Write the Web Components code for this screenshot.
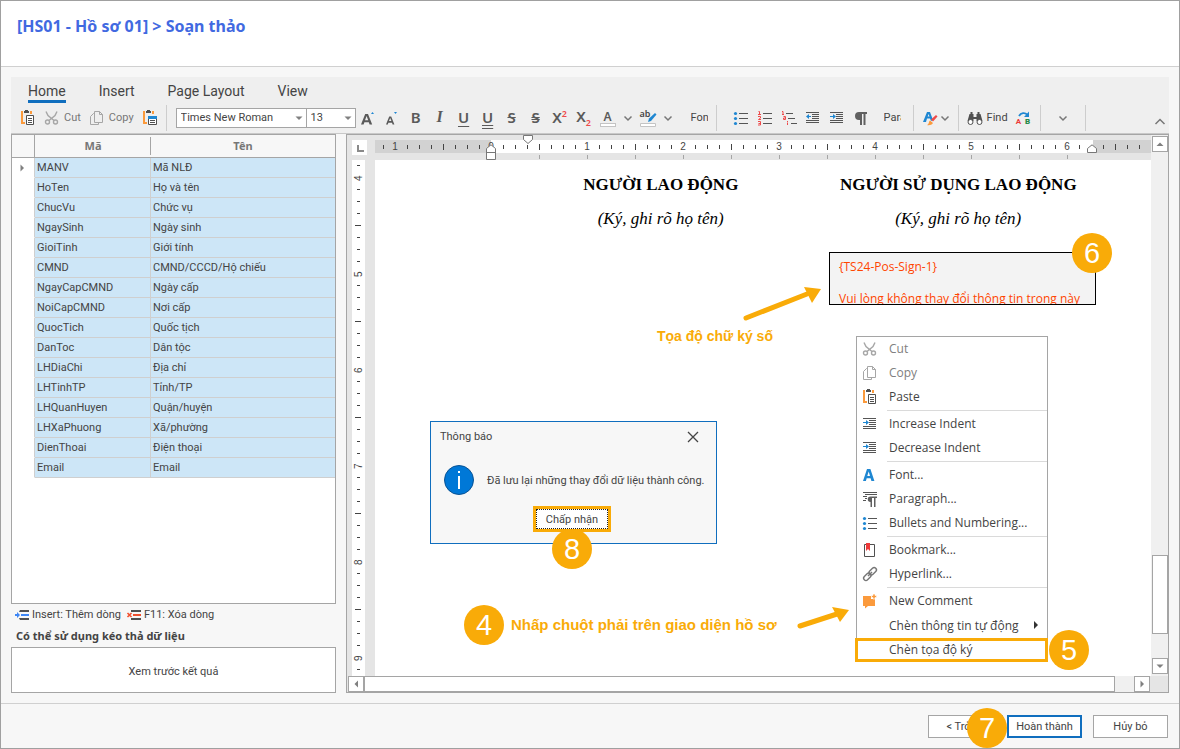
<!DOCTYPE html>
<html lang="vi">
<head>
<meta charset="utf-8">
<title>Soạn thảo hồ sơ</title>
<style>
  body {
    margin: 0;
    --ui: Roboto, "Noto Sans", sans-serif;
    --menu: "Open Sans", "Noto Sans", sans-serif;
    --strong: "Noto Sans", "Open Sans", sans-serif;
    --line: #a5a5a5;
    --blue: #106ebe;
    --mark: #f9ab08;
    color: #444;
    font: 11px/16px var(--ui);
  }
</style>
</head>
<body>
<record-wizard>
  <span slot="title">[HS01 - Hồ sơ 01] &gt; Soạn thảo</span>
  <ribbon-bar slot="ribbon"></ribbon-bar>
  <field-panel slot="fields"></field-panel>
  <doc-editor slot="editor">
    <signature-box></signature-box>
    <message-box heading="Thông báo" action="Chấp nhận">Đã lưu lại những thay đổi dữ liệu thành công.</message-box>
    <context-menu></context-menu>
    <step-note class="sign" arrow="above">Tọa độ chữ ký số</step-note>
    <step-note class="click" arrow="after" step="4">Nhấp chuột phải trên giao diện hồ sơ</step-note>
  </doc-editor>
</record-wizard>

<script>
const PASTE = `
  <path d="M1 1h2v11h2v2H1zM10 1h2v3h-2z" fill="#fb9a3c"/>
  <path d="M4 1h1V0h3v1h1v2H4z" fill="#505050"/>`;
const INDENT = `<path d="M1 2.5h13M7 4.5h7M7 6.5h7M7 8.5h7M1 10.5h13M1 12.5h13" stroke="#555"/>
  <path d="M1 6h3V4l3 2.5L4 9V7H1z" fill="#1f87d2"/>`;
const OUTDENT = `<path d="M1 2.5h13M7 4.5h7M7 6.5h7M7 8.5h7M1 10.5h13M1 12.5h13" stroke="#555"/>
  <path d="M6 6H4V4L1 6.5 4 9V7h2z" fill="#1f87d2"/>`;

const ICONS = {
  paste: `${PASTE}<path d="M6.5 5.5h7v9h-7z" fill="#fff" stroke="#505050"/><path d="M8 8.5h4M8 10.5h4M8 12.5h4" stroke="#505050"/>`,
  pasteSpecial: `${PASTE}<path d="M6.5 6.5h8v8h-8z" fill="#fff" stroke="#505050"/><path d="M6 6h9v3H6z" fill="#1f87d2"/><path d="M8 10.5h5M8 12.5h5" stroke="#505050"/>`,
  cut: `<g fill="none" stroke="#a6a6a6" stroke-width="1.4"><path d="M2 1.5l2 4 6 5M13 1.5l-2 4-6 5"/><circle cx="3.5" cy="12" r="2"/><circle cx="11.5" cy="12" r="2"/></g>`,
  copy: `<g fill="none" stroke="#a6a6a6"><path d="M5.5 3.5h-1l-3 3v8h8v-2"/><path d="M5.5 1.5h5l3 3v8h-8z"/><path d="M10.5 1.5v3h3"/></g>`,
  bullets: `<path d="M6 3.5h9M6 8.5h9M6 13.5h9" stroke="#555"/><g fill="#1f87d2"><circle cx="2.5" cy="3.5" r="1.6"/><circle cx="2.5" cy="8.5" r="1.6"/><circle cx="2.5" cy="13.500" r="1.6"/></g>`,
  numbers: `<path d="M6 3.5h9M6 8.5h9M6 13.5h9" stroke="#555"/><path d="M1.5 1.5h1v3M1 4.5h3M1 6.5h2.5v1.5L1.5 9.5H4M1 11.5h2.5v3.500H1M1.5 13.5h2" fill="none" stroke="#ee4a4a"/>`,
  multilevel: `<path d="M5 3.5h7M7 8.5h7M10 13.5h6" stroke="#555"/><path d="M1 1.5h1v3M1 4.5h2M2.5 6.5h2v3h-2v-1.500h2M6.5 11v1M6.5 12.5v2.500" fill="none" stroke="#ee4a4a"/>`,
  indent: INDENT,
  outdent: OUTDENT,
  pilcrow: '<path d="M14 2H6a4 4 0 0 0 0 8h1v5h2V4h1.5v11h2V4H14z" fill="#606060"/>',
  paragraph: `<path d="M1 1.5h14M3 3.5h12M1 5.5h4M3 7.5h2M1 9.5h3" stroke="#555"/><path d="M15 5.5H8.5a2.700 2.700 0 0 0 0 5.5v5h1.5V7h2v9h1.5V7H15z" fill="#606060"/>`,
  grow: '<path d="M1 14.500L5.200 4h2.800l4.200 10.500H9.600l-.8-2.300H4.400l-.8 2.300zM5 10.300h3.200L6.600 6z" fill="#5a5a5a"/><path d="M11 4l1.500-2L14 4z" fill="#1f87d2"/>',
  shrink: '<path d="M2 14.500L5.200 6.500h2l3.200 8H8.600l-.6-1.800H4.400l-.6 1.800zM5 11.100h2.400L6.200 8z" fill="#5a5a5a"/><path d="M10 2h3l-1.500 2z" fill="#1f87d2"/>',
  brush: '<path d="M1 12L5 2h3l3 8-2 1-1-2.500H5L4 12zM5.700 6.500h1.800L6.600 4z" fill="#1f87d2"/><path d="M9 9.500l5-4.500 1.500 1.500-4.500 5z" fill="#ee4a4a"/><path d="M5 15c2-.5 1.500-3 3-4.500l3 2.500c-1 2-4 2.500-6 2z" fill="#fb9a3c"/>',
  highlight: '<path d="M8 12l1-3.500L15 3l1.500 1.500L11 11z" fill="#1f87d2"/><path d="M.5 13.500h15v3H.5z" fill="#fff" stroke="#c4c4c4"/>',
  find: '<path d="M2.500 4h4v3h3V4h4l2 7H9.500V9h-3v2H.500zM3.500 2h2v2h-2zM10.500 2h2v2h-2z" fill="#505050"/><circle cx="3.500" cy="12" r="2.500" fill="#fff" stroke="#505050"/><circle cx="12.500" cy="12" r="2.500" fill="#fff" stroke="#505050"/>',
  replace: '<path d="M3 6c2-3.500 6-3.500 8-1.500" fill="none" stroke="#1f87d2" stroke-width="1.800"/><path d="M13 1.500V7H8z" fill="#1f87d2"/>',
  fontA: '<path d="M1 14L5 2h3.400l4 12h-3l-.8-2.700H4.700L3.900 14zM5.300 9h2.700L6.700 4.500z" fill="#1f87d2"/>',
  bookmark: '<path d="M2.500 2.500h10v12h-10z" fill="#fff" stroke="#505050"/><path d="M4 1h4v8L6 7 4 9z" fill="#ee3a3a"/>',
  link: '<g fill="none" stroke="#767676" stroke-width="1.400"><rect x="6.500" y="3" width="8.500" height="4.600" rx="2.300" transform="rotate(-45 10.700 5.300)"/><rect x="1" y="8.500" width="8.500" height="4.600" rx="2.300" transform="rotate(-45 5.300 10.700)"/><path d="M6 10l4-4"/></g>',
  comment: '<path d="M1 3h8v3h4v7H6l-3 2.500V13H1z" fill="#fb9a3c"/><path d="M11 1h2v1.500h1.500v2H13V6h-2V4.500H9.500v-2H11z" fill="#fb9a3c" stroke="#fff" stroke-width=".6"/>',
  rowAdd: `<path d="M6 3h9v2H5zM5 11h10v2H6z" fill="#505050"/><path d="M7 7h8v2H7zM1 7h2V5l3 3-3 3V9H1z" fill="#3f87f5"/>`,
  rowDel: `<path d="M5 3h10v2H5zM5 11h10v2H5z" fill="#505050"/><path d="M7 7h8v2H7z" fill="#f0502e"/><path d="M1.500 6l4 4M5.500 6l-4 4" stroke="#f0502e" stroke-width="1.600"/>`,
  down: '<path d="M4.500 6.500L8 10l3.500-3.500" fill="none" stroke="#777" stroke-width="1.500"/>',
  up: '<path d="M3.500 10L8 5.500l4.500 4.500" fill="none" stroke="#777" stroke-width="1.500"/>',
  close: '<path d="M3 3l10 10M13 3L3 13" stroke="#444" stroke-width="1.300"/>',
  triDown: '<path d="M4.500 6.500h7L8 10z" fill="#808080"/>',
  triUp: '<path d="M4.500 10h7L8 6.500z" fill="#808080"/>',
  triLeft: '<path d="M10 4.500v7L6.500 8z" fill="#808080"/>',
  triRight: '<path d="M6.500 4.500v7L10 8z" fill="#808080"/>',
  triMore: '<path d="M4 3v8l4-4z" fill="#333"/>',
};

// shared base: every element here is just markup in an open shadow root
class Base extends HTMLElement {
  connectedCallback() {
    if (this.shadowRoot) { return; }
    this.attachShadow({ mode: 'open' }).innerHTML = this.render();
  }
}

class UiIcon extends Base {
  render() {
    return `
      <style>
        :host { display: inline-block; flex: none; height: 16px; width: 16px; }
        svg { display: block; overflow: visible; }
      </style>
      <svg width="16" height="16" viewBox="0 0 16 16" aria-hidden="true">${ICONS[this.getAttribute('name')] || ''}</svg>
    `;
  }
}

class StepPin extends Base {
  render() {
    return `
      <style>
        :host {
          align-items: center;
          background: var(--mark);
          border-radius: 50%;
          color: #fff;
          display: flex;
          flex: none;
          font: 29px/40px "Liberation Sans", Arial, sans-serif;
          height: 40px;
          justify-content: center;
          width: 40px;
        }
      </style>
      <slot></slot>
    `;
  }
}

class RecordWizard extends Base {
  render() {
    return `
      <style>
        :host {
          background: #f7f7f7;
          border: 1px solid #a0a0a0;
          box-sizing: border-box;
          display: flex;
          flex-direction: column;
          min-height: 100vh;
        }
        header {
          background: #fff;
          border-bottom: 1px solid #d0d0d0;
          padding: 13px 16px 28px;
        }
        h1 {
          color: #4169e1;
          font: bold 16px/24px var(--strong);
          margin: 0;
        }
        main {
          display: flex;
          flex: 1;
          flex-direction: column;
          padding: 10px;
        }
        .work {
          display: grid;
          flex: 1;
          gap: 10px;
          grid-template-columns: 325px minmax(0, 1fr);
        }
        footer {
          border-top: 1px solid #d0d0d0;
          display: flex;
          gap: 11px;
          justify-content: flex-end;
          padding: 11px 11px 10px;
        }
        .pair { display: flex; gap: 4px; position: relative; }
        button {
          background: #fff;
          border: 1px solid #a5a5a5;
          color: #444;
          font: inherit;
          height: 23px;
          padding: 0;
          width: 75px;
        }
        .default { border: 2px solid var(--blue); }
        step-pin { left: 39px; position: absolute; top: -7px; }
      </style>
      <header><h1><slot name="title"></slot></h1></header>
      <main>
        <slot name="ribbon"></slot>
        <div class="work">
          <slot name="fields"></slot>
          <slot name="editor"></slot>
        </div>
      </main>
      <footer>
        <div class="pair">
          <button>&lt; Trở lại</button>
          <button class="default">Hoàn thành</button>
          <step-pin>7</step-pin>
        </div>
        <button>Hủy bỏ</button>
      </footer>
    `;
  }
}

class RibbonBar extends Base {
  icon(name, label) {
    return `<button class="icon" aria-label="${label}"><ui-icon name="${name}"></ui-icon></button>`;
  }

  chevron(label) {
    return `<button class="drop" aria-label="${label}"><ui-icon name="down"></ui-icon></button>`;
  }

  render() {
    return `
      <style>
        :host {
          background: #efefef;
          border-bottom: 1px solid #c8c8c8;
          display: block;
        }
        nav { display: flex; gap: 33px; padding: 5px 17px 0; }
        nav a {
          border-bottom: 3px solid transparent;
          color: #444;
          font-size: 14px;
          line-height: 18px;
          text-decoration: none;
        }
        nav a.on { border-color: var(--blue); }
        .tools {
          align-items: center;
          display: flex;
          height: 26px;
          padding: 3px 0 1px 9px;
        }
        .group {
          align-items: center;
          border-right: 1px solid #cdcdcd;
          display: flex;
          height: 26px;
          margin-bottom: 2px;
        }
        button {
          align-items: center;
          background: none;
          border: 0;
          color: #444;
          display: flex;
          font: inherit;
          height: 22px;
          justify-content: center;
          padding: 0;
        }
        .icon { width: 24px; }
        .drop { width: 16px; }
        .text { gap: 4px; }
        .off { color: #777; }
        .clip { justify-content: flex-start; overflow: hidden; width: 17px; }
        .clipboard { gap: 8px; padding-right: 8px; }
        .font { padding-left: 9px; padding-right: 8px; }
        .clip.font-name { margin: 0 0 0 15px; }
        .para { padding: 0 12px; }
        .para .clip { margin-left: 11px; }
        .style { padding: 0 8px 0 6px; }
        .style .icon { width: 20px; }
        .style .drop { width: 10px; }
        .edit { gap: 8px; padding: 0 8px; }
        .more { padding: 0 14px; }
        .icon.collapse { margin-left: auto; padding-top: 6px; width: 18px; }
        .combo { display: grid; }
        .combo > * { grid-area: 1 / 1; }
        .combo ui-icon { align-self: center; justify-self: end; pointer-events: none; }
        select {
          appearance: none;
          background: #fff;
          border: 1px solid #a5a5a5;
          border-radius: 0;
          color: #444;
          font: inherit;
          height: 20px;
          padding: 0 4px;
        }
        .family { width: 131px; }
        .size { margin-left: -1px; width: 50px; }
        .glyph {
          color: #5a5a5a;
          font-family: var(--strong);
          font-size: 15px;
          font-weight: 600;
          padding-bottom: 2px;
        }
        .i { font-family: "Liberation Serif", serif; font-size: 16px; font-style: italic; }
        .u { text-decoration: underline; text-underline-offset: 3px; }
        .uu { text-decoration: underline double; text-underline-offset: 2px; }
        .s { text-decoration: line-through; }
        .ss { text-decoration: line-through double; }
        .glyph small { color: #ee4a4a; font-size: 9px; line-height: 9px; }
        sup, sub { line-height: 0; }
        .letter {
          display: grid;
          font-size: 12px;
          justify-items: center;
          line-height: 13px;
          padding-top: 2px;
        }
        .letter::after {
          background: #fff;
          border: 1px solid #c4c4c4;
          box-sizing: border-box;
          content: "";
          height: 4px;
          width: 16px;
        }
        .over { display: grid; }
        .over > * { grid-area: 1 / 1; }
        .ab { align-self: start; font: 600 9px/8px var(--strong); justify-self: start; }
        .rep { align-self: end; color: #ee3a3a; display: flex; font-size: 8px; font-weight: 700; gap: 4px; line-height: 8px; }
        .rep b { color: #2a8a4a; }
      </style>
      <nav>
        <a class="on" href="#home">Home</a>
        <a href="#insert">Insert</a>
        <a href="#layout">Page Layout</a>
        <a href="#view">View</a>
      </nav>
      <div class="tools">
        <div class="group clipboard">
          <button aria-label="Paste"><ui-icon name="paste"></ui-icon></button>
          <button class="text off"><ui-icon name="cut"></ui-icon>Cut</button>
          <button class="text off"><ui-icon name="copy"></ui-icon>Copy</button>
          <button aria-label="Paste Special"><ui-icon name="pasteSpecial"></ui-icon></button>
        </div>
        <div class="group font">
          <label class="combo"><select class="family" aria-label="Font name"><option>Times New Roman</option></select><ui-icon name="triDown"></ui-icon></label>
          <label class="combo"><select class="size" aria-label="Font size"><option>13</option></select><ui-icon name="triDown"></ui-icon></label>
          ${this.icon('grow', 'Grow Font')}
          ${this.icon('shrink', 'Shrink Font')}
          <button class="icon glyph">B</button>
          <button class="icon glyph i">I</button>
          <button class="icon glyph u">U</button>
          <button class="icon glyph uu">U</button>
          <button class="icon glyph s">S</button>
          <button class="icon glyph ss">S</button>
          <button class="icon glyph"><span>X<sup><small>2</small></sup></span></button>
          <button class="icon glyph"><span>X<sub><small>2</small></sub></span></button>
          <button class="icon glyph"><span class="letter">A</span></button>
          ${this.chevron('Font Color')}
          <button class="icon"><span class="over"><span class="ab">ab</span><ui-icon name="highlight"></ui-icon></span></button>
          ${this.chevron('Highlight')}
          <button class="clip font-name">Font</button>
        </div>
        <div class="group para">
          ${this.icon('bullets', 'Bullets')}
          ${this.icon('numbers', 'Numbering')}
          ${this.icon('multilevel', 'Multilevel List')}
          ${this.icon('outdent', 'Decrease Indent')}
          ${this.icon('indent', 'Increase Indent')}
          ${this.icon('pilcrow', 'Show Marks')}
          <button class="clip">Paragraph</button>
        </div>
        <div class="group style">
          ${this.icon('brush', 'Styles')}
          ${this.chevron('Styles')}
        </div>
        <div class="group edit">
          <button class="text"><ui-icon name="find"></ui-icon>Find</button>
          <button aria-label="Replace"><span class="over"><ui-icon name="replace"></ui-icon><span class="rep">A <b>B</b></span></span></button>
        </div>
        <div class="group more">${this.chevron('More')}</div>
        <button class="icon collapse" aria-label="Collapse"><ui-icon name="up"></ui-icon></button>
      </div>
    `;
  }
}

class FieldPanel extends Base {
  render() {
    const fields = [
      ['MANV', 'Mã NLĐ'],
      ['HoTen', 'Họ và tên'],
      ['ChucVu', 'Chức vụ'],
      ['NgaySinh', 'Ngày sinh'],
      ['GioiTinh', 'Giới tính'],
      ['CMND', 'CMND/CCCD/Hộ chiếu'],
      ['NgayCapCMND', 'Ngày cấp'],
      ['NoiCapCMND', 'Nơi cấp'],
      ['QuocTich', 'Quốc tịch'],
      ['DanToc', 'Dân tộc'],
      ['LHDiaChi', 'Địa chỉ'],
      ['LHTinhTP', 'Tỉnh/TP'],
      ['LHQuanHuyen', 'Quận/huyện'],
      ['LHXaPhuong', 'Xã/phường'],
      ['DienThoai', 'Điện thoại'],
      ['Email', 'Email'],
    ];

    return `
      <style>
        :host { display: flex; flex-direction: column; }
        .list {
          background: #fff;
          border: 1px solid var(--line);
          flex: 1;
        }
        table {
          border-collapse: separate;
          border-spacing: 0;
          table-layout: fixed;
          width: 100%;
        }
        .mark { width: 23px; }
        .code { width: 116px; }
        th {
          background: linear-gradient(#a5a5a5, #a5a5a5) right center / 1px 18px no-repeat #f7f7f7;
          border-bottom: 1px solid var(--line);
          color: #777;
          font-family: var(--strong);
          height: 22px;
          padding: 0;
        }
        th:first-child { background-size: 1px 100%; }
        th:last-child { background: #f7f7f7; }
        td {
          background: #cde6f7;
          border-bottom: 1px solid #cfcfcf;
          border-right: 1px solid #cfcfcf;
          height: 19px;
          line-height: 19px;
          padding: 0 2px;
        }
        td:first-child { background: #fff; border-bottom-color: transparent; }
        td:last-child { border-right: 0; }
        td ui-icon { display: block; }
        .hints { display: flex; gap: 5px; padding: 3px 3px 0; }
        .hints span { align-items: center; display: flex; gap: 2px; }
        h2 { font: bold 11px/16px var(--strong); margin: 0; padding: 5px 5px 3px; }
        .preview {
          align-items: center;
          background: #fff;
          border: 1px solid var(--line);
          box-sizing: border-box;
          color: inherit;
          display: flex;
          font: inherit;
          height: 46px;
          justify-content: center;
          padding: 3px 0 0;
        }
      </style>
      <div class="list">
        <table>
          <colgroup><col class="mark"><col class="code"><col></colgroup>
          <thead><tr><th></th><th>Mã</th><th>Tên</th></tr></thead>
          <tbody>
            ${fields.map(([code, name], i) => `<tr><td>${i ? '' : '<ui-icon name="triRight"></ui-icon>'}</td><td>${code}</td><td>${name}</td></tr>`).join('')}
          </tbody>
        </table>
      </div>
      <div class="hints">
        <span><ui-icon name="rowAdd"></ui-icon>Insert: Thêm dòng</span>
        <span><ui-icon name="rowDel"></ui-icon>F11: Xóa dòng</span>
      </div>
      <h2>Có thể sử dụng kéo thả dữ liệu</h2>
      <button class="preview">Xem trước kết quả</button>
    `;
  }
}

// ruler with eight 12px steps to the inch; "from" is the step of the first tick
class DocRuler extends Base {
  render() {
    const from = Number(this.getAttribute('from'));
    const to = Number(this.getAttribute('to'));
    let cells = '';
    for (let i = from; i <= to; i++) {
      if (i % 8 === 0) {
        cells += `<span>${Math.abs(i / 8)}</span>`;
      } else {
        cells += `<span><i class="${i % 4 === 0 ? 'half' : ''}"></i></span>`;
      }
    }

    return `
      <style>
        :host {
          display: flex;
          font: 10px/12px "Liberation Sans", Arial, sans-serif;
          overflow: hidden;
        }
        span {
          align-items: center;
          display: flex;
          flex: none;
          height: 13px;
          justify-content: center;
          width: 12px;
        }
        i { background: #444; height: 4px; width: 1px; }
        .half { height: 6px; }
        :host([vertical]) { flex-direction: column; }
        :host([vertical]) span {
          height: 12px;
          transform: rotate(180deg);
          width: 13px;
          writing-mode: vertical-rl;
        }
        :host([vertical]) i { height: 1px; width: 3px; }
        :host([vertical]) .half { width: 6px; }
      </style>
      ${cells}
    `;
  }
}

class ScrollStrip extends Base {
  render() {
    const vertical = this.hasAttribute('vertical');
    const [before, thumb, after] = this.getAttribute('parts').split(' ');
    return `
      <style>
        :host { background: #f0f0f0; display: flex; }
        :host([vertical]) { flex-direction: column; }
        button {
          align-items: center;
          background: #fff;
          border: 1px solid #a5a5a5;
          box-sizing: border-box;
          display: flex;
          flex: none;
          height: 16px;
          justify-content: center;
          padding: 0;
          width: 16px;
        }
        .thumb { background: #fff; border: 1px solid #a5a5a5; box-sizing: border-box; }
      </style>
      <button aria-label="Back"><ui-icon name="${vertical ? 'triUp' : 'triLeft'}"></ui-icon></button>
      <div style="flex: ${before}"></div>
      <div class="thumb" style="flex: ${thumb}"></div>
      <div style="flex: ${after}"></div>
      <button aria-label="Forward"><ui-icon name="${vertical ? 'triDown' : 'triRight'}"></ui-icon></button>
    `;
  }
}

class DocEditor extends Base {
  render() {
    return `
      <style>
        :host {
          background: #e5e5e5;
          border: 1px solid var(--line);
          display: grid;
          grid-template-columns: 28px minmax(0, 1fr) 17px;
          grid-template-rows: 25px minmax(516px, 1fr) 16px;
        }
        .corner {
          background: #fff;
          height: 15px;
          margin: 5px 0 0 5px;
          width: 15px;
        }
        .corner svg { display: block; }
        .top { padding-top: 5px; position: relative; }
        .top doc-ruler {
          background: linear-gradient(90deg, #d2d2d2 116px, #fff 116px 718px, #d2d2d2 718px);
          height: 13px;
          padding-left: 2px;
        }
        .stops {
          background: repeating-linear-gradient(90deg, #a5a5a5 0 1px, transparent 1px 48px);
          height: 4px;
          margin: 2px 80px 0 164px;
        }
        .marker { position: absolute; }
        .first { left: 148px; top: 0; }
        .hang { left: 111px; top: 9px; }
        .right { left: 712px; top: 9px; }
        .side { background: #fff; margin-left: 5px; min-height: 0; overflow: hidden; width: 13px; }
        .page {
          align-content: start;
          background: #fff;
          box-sizing: border-box;
          color: #000;
          display: grid;
          font: 17px/20px "Liberation Serif", "Times New Roman", serif;
          grid-template-columns: 1fr 1fr;
          padding: 15px 44px 0 137px;
          position: relative;
          row-gap: 14px;
          text-align: center;
        }
        .v { grid-area: 1 / 3 / 3 / 4; padding: 1px 0 2px 1px; }
        .h { grid-column: 1 / 3; margin: 0 1px; }
        ::slotted(*) { font: 11px/16px var(--ui); position: absolute; text-align: left; }
        ::slotted(signature-box) { left: 454px; top: 92px; }
        ::slotted(message-box) { left: 55px; top: 261px; }
        ::slotted(context-menu) { left: 481px; top: 176px; }
        ::slotted(.sign) { left: 282px; top: 127px; }
        ::slotted(.click) { left: 89px; top: 445px; }
      </style>
      <div class="corner"><svg width="15" height="15" viewBox="0 0 15 15"><path d="M6 5v6h6" fill="none" stroke="#8a8a8a" stroke-width="2"/></svg></div>
      <div class="top">
        <doc-ruler from="-9" to="54"></doc-ruler>
        <div class="stops"></div>
        <svg class="marker first" width="10" height="10" viewBox="0 0 10 10"><path d="M.5.500h9v4L5 8.500.500 4.500z" fill="#fff" stroke="#777"/></svg>
        <svg class="marker hang" width="10" height="16" viewBox="0 0 10 16"><path d="M.5 15.500v-11L5 .8l4.500 3.700v11zM.5 8.500h9" fill="#fff" stroke="#777"/></svg>
        <svg class="marker right" width="10" height="10" viewBox="0 0 10 10"><path d="M.5 8.500v-4L5 .8l4.500 3.700v4z" fill="#fff" stroke="#777"/></svg>
      </div>
      <div class="side"><doc-ruler vertical from="31" to="73"></doc-ruler></div>
      <div class="page">
        <b>NGƯỜI LAO ĐỘNG</b><b>NGƯỜI SỬ DỤNG LAO ĐỘNG</b>
        <em>(Ký, ghi rõ họ tên)</em><em>(Ký, ghi rõ họ tên)</em>
        <slot></slot>
      </div>
      <scroll-strip class="v" vertical parts="405 78 24"></scroll-strip>
      <scroll-strip class="h" parts="0 751 19"></scroll-strip>
    `;
  }
}

class SignatureBox extends Base {
  render() {
    return `
      <style>
        :host { color: #ff4500; display: block; width: 267px; }
        .clip {
          background: #f3f3f3;
          border: 1px solid #000;
          box-sizing: border-box;
          font: 12px/16px var(--menu);
          height: 53px;
          overflow: hidden;
          padding: 6px 9px 0;
          white-space: nowrap;
        }
        p { margin: 0 0 16px; }
        step-pin { position: absolute; right: -16px; top: -19px; }
      </style>
      <div class="clip"><p>{TS24-Pos-Sign-1}</p><p>Vui lòng không thay đổi thông tin trong này</p></div>
      <step-pin>6</step-pin>
    `;
  }
}

class MessageBox extends Base {
  render() {
    return `
      <style>
        :host {
          background: #f7f7f7;
          border: 1px solid var(--blue);
          box-sizing: border-box;
          color: #444;
          display: grid;
          grid-template-columns: minmax(0, 1fr);
          padding: 7px 12px 14px 9px;
          row-gap: 20px;
          width: 287px;
        }
        .head { align-items: center; display: flex; justify-content: space-between; padding-right: 3px; }
        .close { background: none; border: 0; display: flex; padding: 0; }
        .body { align-items: center; display: flex; gap: 13px; padding-left: 4px; white-space: nowrap; }
        .body svg { flex: none; }
        .body span { padding-top: 2px; }
        .ok { justify-self: center; margin-top: -6px; position: relative; }
        .ok button {
          background: #fff;
          border: 1px dotted #222;
          color: inherit;
          display: block;
          font: inherit;
          height: 20px;
          outline: 3px solid var(--mark);
          padding: 2px 0 0;
          width: 72px;
        }
        step-pin { left: 16px; position: absolute; top: 20px; }
      </style>
      <div class="head">${this.getAttribute('heading')}<button class="close" aria-label="Close"><ui-icon name="close"></ui-icon></button></div>
      <div class="body">
        <svg width="30" height="30" viewBox="0 0 30 30"><circle cx="15" cy="15" r="14.500" fill="#0078d7" stroke="#0a5394"/><path d="M14 6h2v2h-2zM14 11h2v13h-2z" fill="#fff"/></svg>
        <span><slot></slot></span>
      </div>
      <div class="ok"><step-pin>8</step-pin><button>${this.getAttribute('action')}</button></div>
    `;
  }
}

class ContextMenu extends Base {
  item(icon, text, cls = '') {
    return `<button role="menuitem" class="${cls}"><ui-icon name="${icon}"></ui-icon>${text}</button>`;
  }

  render() {
    return `
      <style>
        :host {
          background: #fff;
          border: 1px solid var(--line);
          border-bottom: 0;
          box-sizing: border-box;
          color: #444;
          display: block;
          width: 192px;
        }
        button {
          align-items: center;
          background: none;
          border: 0;
          box-sizing: border-box;
          color: inherit;
          display: flex;
          font: 12px/16px var(--menu);
          gap: 11px;
          height: 24px;
          padding: 0 5px;
          white-space: nowrap;
          width: 100%;
        }
        .off { color: #808080; }
        hr { border: 0; border-top: 1px solid #dadada; margin: 1px 0 1px 30px; }
        .more ui-icon:last-child { margin-left: auto; }
        .own { margin: 1px -1px 0 -2px; position: relative; }
        .own button { padding: 0 7px; }
        .own button:last-of-type { outline: 3px solid var(--mark); outline-offset: -3px; }
        step-pin { left: 194px; position: absolute; top: 16px; }
      </style>
      ${this.item('cut', 'Cut', 'off')}
      ${this.item('copy', 'Copy', 'off')}
      ${this.item('paste', 'Paste')}
      <hr>
      ${this.item('indent', 'Increase Indent')}
      ${this.item('indent', 'Decrease Indent')}
      <hr>
      ${this.item('fontA', 'Font...')}
      ${this.item('paragraph', 'Paragraph...')}
      ${this.item('bullets', 'Bullets and Numbering...')}
      <hr>
      ${this.item('bookmark', 'Bookmark...')}
      ${this.item('link', 'Hyperlink...')}
      <hr>
      ${this.item('comment', 'New Comment')}
      <div class="own">
        <button role="menuitem" class="more"><ui-icon></ui-icon>Chèn thông tin tự động<ui-icon name="triMore"></ui-icon></button>
        ${this.item('', 'Chèn tọa độ ký')}
        <step-pin>5</step-pin>
      </div>
    `;
  }
}

class StepNote extends Base {
  render() {
    const step = this.getAttribute('step');
    const above = this.getAttribute('arrow') === 'above';
    const arrow = above
      ? '<svg width="78" height="34" viewBox="0 0 78 34"><path d="M3 31L64 7" stroke="#f9ab08" stroke-width="5" stroke-linecap="round"/><path d="M61 0l17 2-9 14z" fill="#f9ab08"/></svg>'
      : '<svg width="54" height="24" viewBox="0 0 54 24"><path d="M3 19L40 7" stroke="#f9ab08" stroke-width="5" stroke-linecap="round"/><path d="M35 0l17 3-9 12z" fill="#f9ab08"/></svg>';
    return `
      <style>
        :host { align-items: center; display: flex; white-space: nowrap; }
        :host([arrow="above"]) { align-items: flex-start; flex-direction: column; gap: 5px; }
        :host([arrow="above"]) svg { margin-left: 86px; }
        .note {
          color: var(--mark);
          font: bold 15px/20px "Liberation Sans", Arial, sans-serif;
        }
        :host([arrow="above"]) .note { font-size: 14px; }
        step-pin { margin-right: 7px; }
        svg { flex: none; }
        .note + svg { margin: -12px 0 0 20px; }
      </style>
      ${above ? arrow : ''}
      ${step ? `<step-pin>${step}</step-pin>` : ''}
      <span class="note"><slot></slot></span>
      ${above ? '' : arrow}
    `;
  }
}

customElements.define('ui-icon', UiIcon);
customElements.define('step-pin', StepPin);
customElements.define('ribbon-bar', RibbonBar);
customElements.define('field-panel', FieldPanel);
customElements.define('doc-ruler', DocRuler);
customElements.define('scroll-strip', ScrollStrip);
customElements.define('signature-box', SignatureBox);
customElements.define('message-box', MessageBox);
customElements.define('context-menu', ContextMenu);
customElements.define('step-note', StepNote);
customElements.define('doc-editor', DocEditor);
customElements.define('record-wizard', RecordWizard);
</script>
</body>
</html>
